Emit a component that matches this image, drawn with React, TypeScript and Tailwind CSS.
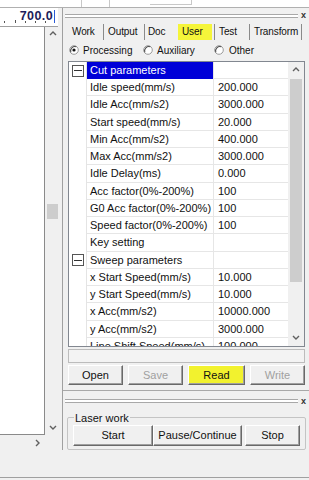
import React from 'react'

const FONT = { fontFamily: '"Liberation Sans", Arial, sans-serif' }

type Row = { name: string; value?: string; cat?: boolean; selected?: boolean }

const ROWS: Row[] = [
  { name: 'Cut parameters', cat: true, selected: true },
  { name: 'Idle speed(mm/s)', value: '200.000' },
  { name: 'Idle Acc(mm/s2)', value: '3000.000' },
  { name: 'Start speed(mm/s)', value: '20.000' },
  { name: 'Min Acc(mm/s2)', value: '400.000' },
  { name: 'Max Acc(mm/s2)', value: '3000.000' },
  { name: 'Idle Delay(ms)', value: '0.000' },
  { name: 'Acc factor(0%-200%)', value: '100' },
  { name: 'G0 Acc factor(0%-200%)', value: '100' },
  { name: 'Speed factor(0%-200%)', value: '100' },
  { name: 'Key setting', value: '' },
  { name: 'Sweep parameters', cat: true },
  { name: 'x Start Speed(mm/s)', value: '10.000' },
  { name: 'y Start Speed(mm/s)', value: '10.000' },
  { name: 'x Acc(mm/s2)', value: '10000.000' },
  { name: 'y Acc(mm/s2)', value: '3000.000' },
  { name: 'Line Shift Speed(mm/s)', value: '100.000' },
]

const Chevron = ({ dir }: { dir: 'up' | 'down' | 'right' }) => {
  const pts = dir === 'up' ? '1,5 4,2 7,5' : dir === 'down' ? '1,2 4,5 7,2' : '2,1 5,4 2,7'
  return (
    <svg width="8" height="8" viewBox="0 0 8 8">
      <polyline points={pts} fill="none" stroke="#606060" strokeWidth="1.4" />
    </svg>
  )
}

const Radio = ({ checked }: { checked?: boolean }) => (
  <svg width="10" height="10" viewBox="0 0 10 10" className="shrink-0">
    <circle cx="5" cy="5" r="4.3" fill="#fff" stroke="#9a9a9a" strokeWidth="1" />
    <path d="M1.8 7.2 A4.3 4.3 0 0 1 7.2 1.8" fill="none" stroke="#505050" strokeWidth="1.1" />
    {checked && <circle cx="5" cy="5" r="1.6" fill="#111" />}
  </svg>
)

const MinusBox = () => (
  <div className="w-[12px] h-[12px] border border-[#555] bg-white flex items-center justify-center">
    <div className="w-[8px] h-[1px] bg-[#333]" />
  </div>
)

const Btn = ({
  children,
  className = '',
  disabled,
}: {
  children: React.ReactNode
  className?: string
  disabled?: boolean
}) => (
  <div
    className={
      'flex items-center justify-center border border-t-white border-l-white border-r-[#696969] border-b-[#696969] shadow-[inset_-1px_-1px_0_#a0a0a0] text-[11px] ' +
      (disabled ? 'text-[#a0a0a0] ' : 'text-[#111] ') +
      className
    }
  >
    {children}
  </div>
)

const Splitter = () => (
  <div className="flex items-center h-[5px]">
    <div className="ml-[2px] flex-1 h-[4px] border-t border-b border-[#a8a8a8] bg-white" />
    <span className="w-[11px] text-center text-[9px] leading-none font-bold text-[#333]">x</span>
  </div>
)

const TabSep = () => <div className="w-[1px] h-[16px] bg-[#8a8a8a] shrink-0" />

export default function App() {
  return (
    <div style={FONT} className="w-[309px] h-[480px] bg-[#f0f0f0] flex flex-col overflow-hidden text-[11px] text-[#111]">
      {/* toolbar bottom edge */}
      <div className="h-[8px] bg-white border-b border-[#b0b0b0] flex shrink-0">
        <div className="w-[81px]" />
        <div className="w-[29px] border-l border-r border-[#c8c8c8]" />
        <div className="w-[40px]" />
        <div className="w-[42px] h-[5px] border-r border-b border-[#c8c8c8]" />
      </div>

      <div className="flex h-[442px] shrink-0">
        {/* drawing area */}
        <div className="w-[62px] flex flex-col shrink-0">
          <div className="h-[19px] w-[58px] bg-white border-b border-[#a0a0a0] relative flex items-start justify-end">
            <span className="mt-[1px] mr-[5px] font-bold text-[12.5px] leading-[15px] text-[#1c1c5a] tracking-[0.4px]">700.0</span>
            <div className="absolute left-[54px] top-[2px] w-[1px] h-[13px] bg-[#2a5bd7]" />
            <svg className="absolute left-0 bottom-[3px]" width="58" height="3" viewBox="0 0 58 3">
              {[4, 15, 25, 35, 45].map((x) => (
                <rect key={x} x={x} y={x === 15 ? 0 : 1} width="1" height={x === 15 ? 3 : 2} fill="#555" />
              ))}
            </svg>
          </div>
          <div className="flex h-[408px]">
            <div className="w-[45px] bg-white border-r border-b border-[#8a8a8a]" />
            <div className="w-[15px] flex flex-col items-center justify-between py-[3px]">
              <Chevron dir="up" />
              <div className="w-[11px] h-[15px] bg-[#cdcdcd] mt-[166px]" />
              <div className="flex-1" />
              <Chevron dir="down" />
            </div>
          </div>
          <div className="h-[15px] w-[45px] flex items-center justify-end pr-[3px]">
            <Chevron dir="right" />
          </div>
        </div>

        {/* right panel */}
        <div className="flex-1 border-l border-[#a0a0a0] flex flex-col">
          <div className="mt-[5px]">
            <Splitter />
          </div>

          {/* tabs */}
          <div className="mt-[4px] h-[20px] flex items-center text-[10px] tracking-[-0.1px] whitespace-nowrap">
            <div className="w-[9px]" />
            <div className="w-[31px]">Work</div>
            <TabSep />
            <div className="w-[40px] pl-[4px]">Output</div>
            <TabSep />
            <div className="w-[33px] pl-[3px]">Doc</div>
            <div className="w-[34px] h-[16px] bg-[#f5f53a] pl-[4px] flex items-center">User</div>
            <div className="w-[2px]" />
            <TabSep />
            <div className="w-[34px] pl-[4px]">Test</div>
            <TabSep />
            <div className="w-[51px] pl-[4px]">Transform</div>
            <TabSep />
          </div>

          {/* radio row */}
          <div className="h-[17px] flex items-center pl-[6px] text-[10px]">
            <div className="flex items-center gap-[4px] w-[74px]">
              <Radio checked />
              <span>Processing</span>
            </div>
            <div className="flex items-center gap-[4px] w-[71px]">
              <Radio />
              <span>Auxiliary</span>
            </div>
            <div className="flex items-center gap-[5px]">
              <Radio />
              <span>Other</span>
            </div>
          </div>

          {/* property grid */}
          <div className="mt-[2px] ml-[5px] w-[237px] h-[287px] border border-[#828790] bg-white flex overflow-hidden">
            <div className="flex-1 flex flex-col overflow-hidden">
              {ROWS.map((r) => (
                <div key={r.name} className="h-[17.25px] shrink-0 flex">
                  <div className="w-[18px] flex items-center justify-center border-r border-[#e4e4e4]">
                    {r.cat && <MinusBox />}
                  </div>
                  <div
                    className={
                      'w-[126px] pl-[3px] flex items-center whitespace-nowrap overflow-hidden border-b ' +
                      (r.selected ? 'bg-[#0000d8] text-white border-[#0000d8]' : 'border-[#e6e6e6]')
                    }
                  >
                    {r.name}
                  </div>
                  <div className="flex-1 pl-[4px] flex items-center border-l border-b border-[#e6e6e6]">
                    {r.value}
                  </div>
                </div>
              ))}
            </div>
            <div className="w-[16px] bg-[#f0f0f0] flex flex-col items-center py-[4px]">
              <Chevron dir="up" />
              <div className="mt-[5px] w-[12px] h-[203px] bg-[#cdcdcd]" />
              <div className="flex-1" />
              <Chevron dir="down" />
            </div>
          </div>

          {/* progress */}
          <div className="mt-[2px] ml-[5px] w-[237px] h-[14px] border border-[#bcbcbc] bg-[#f3f3f3]" />

          {/* file buttons */}
          <div className="mt-[2px] ml-[5px] w-[237px] h-[20px] flex gap-[5px]">
            <Btn className="w-[55px]">Open</Btn>
            <Btn className="w-[55px]" disabled>Save</Btn>
            <Btn className="w-[57px] bg-[#f2f22e]">Read</Btn>
            <Btn className="flex-1" disabled>Write</Btn>
          </div>

          <div className="mt-[5px] border-t border-[#a8a8a8]" />
          <div className="mt-[8px]">
            <Splitter />
          </div>

          {/* laser work group */}
          <fieldset className="mt-[8px] ml-[4px] w-[239px] border border-[#c4c4c4] rounded-[2px] px-[5px] pb-[3px]">
            <legend className="ml-[1px] px-[1px] text-[11px] leading-[12px]">Laser work</legend>
            <div className="flex h-[21px] mt-[1px]">
              <Btn className="w-[80px]">Start</Btn>
              <Btn className="w-[89px]">Pause/Continue</Btn>
              <div className="w-[3px]" />
              <Btn className="flex-1">Stop</Btn>
            </div>
          </fieldset>
        </div>
      </div>

      <div className="flex-1 border-b border-[#a0a0a0] mb-[2px]" />
    </div>
  )
}
